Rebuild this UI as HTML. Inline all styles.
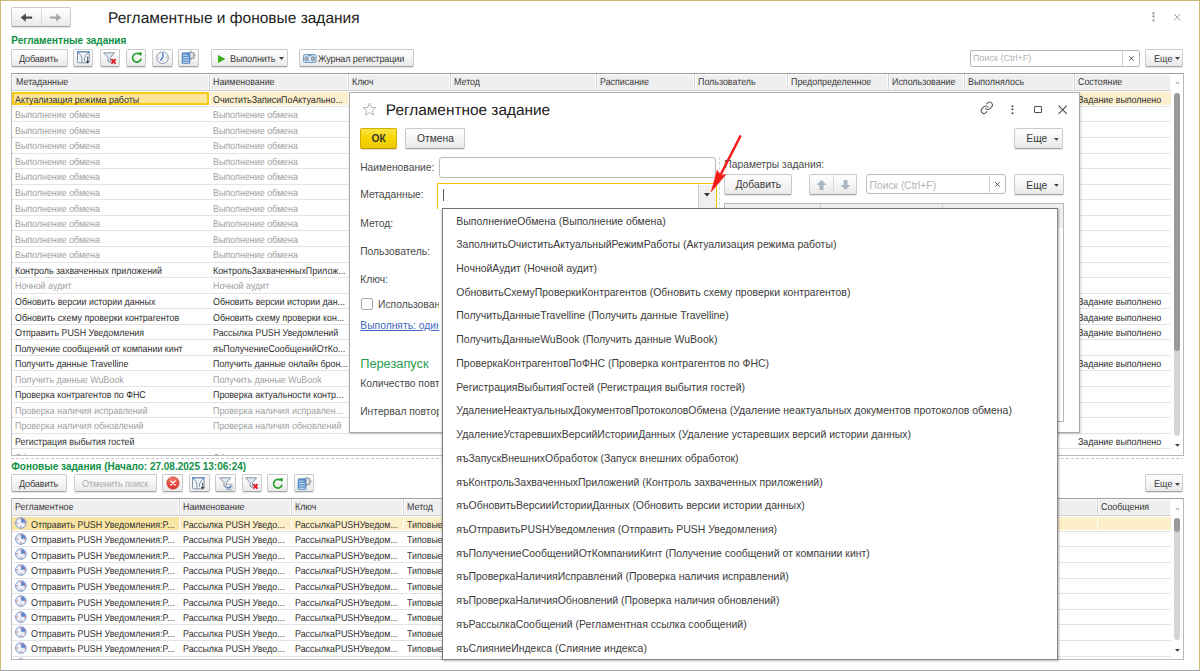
<!DOCTYPE html><html><head><meta charset="utf-8"><style>
*{box-sizing:border-box}
html,body{margin:0;padding:0}
body{width:1200px;height:671px;overflow:hidden;position:relative;background:#fff;font-family:"Liberation Sans",sans-serif;color:#333}
.ab{position:absolute}
.t{position:absolute;white-space:nowrap;line-height:1}
.btn{position:absolute;border:1px solid #cacaca;border-bottom-color:#a5a5a5;border-radius:2px;background:linear-gradient(#ffffff,#f4f4f4 55%,#e9e9e9);box-shadow:0 1px 0 rgba(0,0,0,.10)}
.hdr{position:absolute;background:#f0f0f0}
.sep{position:absolute;width:1px;background:#d8d8d8}
.rl{position:absolute;height:1px;background:#e4e4e4}
.clip{position:absolute;overflow:hidden}
svg{position:absolute;overflow:visible}
</style></head><body>
<div class="ab" style="left:0;top:0;width:1200px;height:1px;background:#cbbb78"></div>
<div class="ab" style="left:0;top:0;width:1px;height:670px;background:#cbbb78"></div>
<div class="ab" style="left:1199px;top:0;width:1px;height:670px;background:#cbbb78"></div>
<div class="ab" style="left:0;top:670px;width:1200px;height:1px;background:#a6a6a6"></div>
<div class="btn" style="left:11px;top:7px;width:60px;height:20.3px"></div>
<div class="ab" style="left:41px;top:8px;width:1px;height:18.3px;background:#dcdcdc"></div>
<svg style="left:0;top:0" width="80" height="30" viewBox="0 0 80 30"><path d="M20.6 17.6 L25.9 13.4 L25.9 21.8Z" fill="#4a4a4a"/><rect x="25" y="16.5" width="7.1" height="2.2" fill="#4a4a4a"/><path d="M61.4 17.6 L56.1 13.4 L56.1 21.8Z" fill="#a8a8a8"/><rect x="49.9" y="16.5" width="7.1" height="2.2" fill="#a8a8a8"/></svg>
<div class="t" style="left:108.00px;top:11.00px;font-size:15.5px;color:#1c1c1c;font-weight:normal;text-rendering:geometricPrecision;">Регламентные и фоновые задания</div>
<svg style="left:1150.5px;top:11.00px" width="5" height="5" viewBox="0 0 5 5"><circle cx="2.5" cy="2.4" r="1.05" fill="#8c8c8c"/></svg>
<svg style="left:1150.5px;top:14.30px" width="5" height="5" viewBox="0 0 5 5"><circle cx="2.5" cy="2.4" r="1.05" fill="#8c8c8c"/></svg>
<svg style="left:1150.5px;top:17.60px" width="5" height="5" viewBox="0 0 5 5"><circle cx="2.5" cy="2.4" r="1.05" fill="#8c8c8c"/></svg>
<svg style="left:1172px;top:12px" width="10" height="10" viewBox="0 0 10 10"><path d="M2.2 2.2 L8.4 8.4 M8.4 2.2 L2.2 8.4" stroke="#9c9c9c" stroke-width="1"/></svg>
<div class="t" style="left:11.30px;top:36.00px;font-size:10px;color:#0f8f45;font-weight:bold;">Регламентные задания</div>
<div class="btn" style="left:11px;top:49.2px;width:56.70px;height:17.60px"></div>
<div class="t" style="left:18.90px;top:55.00px;font-size:9.9px;color:#383838;font-weight:normal;transform:scaleX(0.9192);transform-origin:0 0;text-rendering:geometricPrecision;letter-spacing:-0.15px">Добавить</div>
<div class="btn" style="left:73.3px;top:49.2px;width:20.20px;height:17.60px"></div><svg style="left:76.8px;top:51px" width="14" height="14" viewBox="0 0 14 14">
<rect x="0.5" y="0.5" width="11.6" height="11.3" rx="1.2" fill="#f3f6f9" stroke="#7f8fa2" stroke-width="1"/>
<path d="M1 1 H11.6" stroke="#7a9ac0" stroke-width="1.2"/>
<path d="M1.3 1.6 Q4.6 4.2 5 7.2 V11.2 M11.3 1.6 Q8 4.2 7.6 7.2 V10" fill="none" stroke="#6f8092" stroke-width="0.9"/>
<rect x="-0.1" y="0.2" width="1.8" height="1.8" fill="#3f86d6"/><rect x="10.9" y="0.2" width="1.8" height="1.8" fill="#3f86d6"/>
<path d="M10.6 5.6 V11" stroke="#5a6a7a" stroke-width="1.1"/><path d="M8.8 10 L10.6 12.6 L12.4 10Z" fill="#2f3f4f"/>
</svg>
<div class="btn" style="left:99.5px;top:49.2px;width:20.50px;height:17.60px"></div><svg style="left:102.8px;top:51.5px" width="14" height="14" viewBox="0 0 14 14">
<path d="M0.6 0.8 H11.6 L7.4 5.6 V10.4 L5 9.4 V5.6Z" fill="#e3e9ef" stroke="#8796a8" stroke-width="1" stroke-linejoin="round"/>
<path d="M8.4 7.2 L12.6 11.6 M12.6 7.2 L8.4 11.6" stroke="#e31c24" stroke-width="1.9"/>
</svg>
<div class="btn" style="left:125.5px;top:49.2px;width:20.50px;height:17.60px"></div><svg style="left:129.6px;top:51.2px" width="14" height="14" viewBox="0 0 14 14">
<path d="M11.1 7.6 A4.3 4.3 0 1 1 9.6 3.4" fill="none" stroke="#27a22c" stroke-width="1.7"/>
<path d="M8.2 1.7 L11.9 1.2 L11.1 5.2Z" fill="#139a1e"/>
</svg>
<div class="btn" style="left:152px;top:49.2px;width:20.50px;height:17.60px"></div><svg style="left:155.5px;top:51.2px" width="14" height="14" viewBox="0 0 14 14">
<circle cx="6.5" cy="6.7" r="5.8" fill="#f3f7fb" stroke="#8a9bb0" stroke-width="1"/>
<path d="M6.6 1.9 Q7.4 4 6.8 6.4 L4.2 9.6" stroke="#2f6db8" stroke-width="1.2" fill="none"/>
<circle cx="2.7" cy="6.6" r=".65" fill="#f08080"/><circle cx="10.5" cy="6.6" r=".65" fill="#f08080"/><circle cx="6.7" cy="10.3" r=".65" fill="#f08080"/>
</svg>
<div class="btn" style="left:178px;top:49.2px;width:21.00px;height:17.60px"></div><svg style="left:181px;top:51.2px" width="15" height="14" viewBox="0 0 15 14">
<path d="M14.14 3.69 L14.14 5.11 L13.02 5.08 L12.62 6.05 L13.43 6.82 L12.42 7.83 L11.65 7.02 L10.68 7.42 L10.71 8.54 L9.29 8.54 L9.32 7.42 L8.35 7.02 L7.58 7.83 L6.57 6.82 L7.38 6.05 L6.98 5.08 L5.86 5.11 L5.86 3.69 L6.98 3.72 L7.38 2.75 L6.57 1.98 L7.58 0.97 L8.35 1.78 L9.32 1.38 L9.29 0.26 L10.71 0.26 L10.68 1.38 L11.65 1.78 L12.42 0.97 L13.43 1.98 L12.62 2.75 L13.02 3.72Z" fill="#a8a8b0" stroke="#85858c" stroke-width=".5"/>
<circle cx="10" cy="4.4" r="2.3" fill="#e4e4ec"/>
<rect x="1" y="1.8" width="8" height="10.8" rx="1.2" fill="#5c92cb" stroke="#4477b0" stroke-width=".6"/>
<path d="M1.8 4.2 H6.6 M1.8 6.6 H8.2 M1.8 9 H8.2 M1.8 11.3 H8.2" stroke="#d8e8fa" stroke-width=".9"/>
</svg>
<div class="btn" style="left:211px;top:49.2px;width:76.70px;height:17.60px"></div><svg style="left:218px;top:54.5px" width="8" height="8" viewBox="0 0 8 8"><path d="M0 0 L7.4 4 L0 8Z" fill="#3aae1f"/></svg><svg style="left:279px;top:57.3px" width="5" height="3" viewBox="0 0 5 3"><path d="M0 0 H5 L2.5 3Z" fill="#404040"/></svg>
<div class="t" style="left:230.00px;top:55.00px;font-size:9.9px;color:#383838;font-weight:normal;transform:scaleX(0.9192);transform-origin:0 0;text-rendering:geometricPrecision;letter-spacing:-0.15px">Выполнить</div>
<div class="btn" style="left:299.2px;top:49.2px;width:114.60px;height:17.60px"></div><svg style="left:303px;top:54px" width="14" height="9" viewBox="0 0 14 9"><rect x=".5" y=".5" width="12.6" height="8" rx="1.3" fill="#c3def6" stroke="#7c9dc0"/><rect x="5" y="3.8" width="3.6" height="2" fill="#e8f4ff"/><ellipse cx="3.6" cy="4.8" rx="1.5" ry="1.8" fill="#c8ccd0" stroke="#5d6a78" stroke-width=".8"/><ellipse cx="10" cy="4.8" rx="1.5" ry="1.8" fill="#c8ccd0" stroke="#5d6a78" stroke-width=".8"/><path d="M5.2 1.6 H8.4" stroke="#6a7888" stroke-width=".9"/></svg>
<div class="t" style="left:318.00px;top:55.00px;font-size:9.9px;color:#383838;font-weight:normal;transform:scaleX(0.9192);transform-origin:0 0;text-rendering:geometricPrecision;letter-spacing:-0.12px">Журнал регистрации</div>
<div class="btn" style="left:1145px;top:49.2px;width:38.40px;height:17.60px"></div><svg style="left:1175px;top:57.3px" width="5" height="3" viewBox="0 0 5 3"><path d="M0 0 H5 L2.5 3Z" fill="#404040"/></svg>
<div class="t" style="left:1153.50px;top:55.00px;font-size:9.9px;color:#383838;font-weight:normal;transform:scaleX(0.9192);transform-origin:0 0;text-rendering:geometricPrecision;">Еще</div>
<div class="ab" style="left:970px;top:50px;width:170px;height:16.6px;border:1px solid #b7b7b7;border-radius:2px;background:#fff"></div>
<div class="ab" style="left:1122px;top:51px;width:1px;height:14.6px;background:#d2d2d2"></div>
<div class="t" style="left:973.00px;top:54.00px;font-size:9px;color:#b2b2b2;font-weight:normal;">Поиск (Ctrl+F)</div>
<svg style="left:1128px;top:55px" width="7" height="7" viewBox="0 0 7 7"><path d="M1.3 1.3 L5.5 5.5 M5.5 1.3 L1.3 5.5" stroke="#4a4a4a" stroke-width="1"/></svg>
<div class="ab" style="left:11px;top:73px;width:1173px;height:383px;border:1px solid #b9b9b9;border-top-color:#9c9c9c;background:#fff"></div>
<div class="clip" style="left:12px;top:74px;width:1159px;height:381px">
<div class="ab" style="left:0px;top:0;width:197px;height:16.299999999999997px;background:#efefef;border:1px solid #fdfdfd;border-bottom:none"></div>
<div class="ab" style="left:198px;top:0;width:138px;height:16.299999999999997px;background:#efefef;border:1px solid #fdfdfd;border-bottom:none"></div>
<div class="ab" style="left:337px;top:0;width:101px;height:16.299999999999997px;background:#efefef;border:1px solid #fdfdfd;border-bottom:none"></div>
<div class="ab" style="left:439px;top:0;width:145px;height:16.299999999999997px;background:#efefef;border:1px solid #fdfdfd;border-bottom:none"></div>
<div class="ab" style="left:585px;top:0;width:97px;height:16.299999999999997px;background:#efefef;border:1px solid #fdfdfd;border-bottom:none"></div>
<div class="ab" style="left:683px;top:0;width:92px;height:16.299999999999997px;background:#efefef;border:1px solid #fdfdfd;border-bottom:none"></div>
<div class="ab" style="left:776px;top:0;width:100px;height:16.299999999999997px;background:#efefef;border:1px solid #fdfdfd;border-bottom:none"></div>
<div class="ab" style="left:877px;top:0;width:75px;height:16.299999999999997px;background:#efefef;border:1px solid #fdfdfd;border-bottom:none"></div>
<div class="ab" style="left:953px;top:0;width:109px;height:16.299999999999997px;background:#efefef;border:1px solid #fdfdfd;border-bottom:none"></div>
<div class="ab" style="left:1063px;top:0;width:96px;height:16.299999999999997px;background:#efefef;border:1px solid #fdfdfd;border-bottom:none"></div>
<div class="ab" style="left:197px;top:0;width:1px;height:16.299999999999997px;background:#d3d3d3"></div>
<div class="ab" style="left:336px;top:0;width:1px;height:16.299999999999997px;background:#d3d3d3"></div>
<div class="ab" style="left:438px;top:0;width:1px;height:16.299999999999997px;background:#d3d3d3"></div>
<div class="ab" style="left:584px;top:0;width:1px;height:16.299999999999997px;background:#d3d3d3"></div>
<div class="ab" style="left:682px;top:0;width:1px;height:16.299999999999997px;background:#d3d3d3"></div>
<div class="ab" style="left:775px;top:0;width:1px;height:16.299999999999997px;background:#d3d3d3"></div>
<div class="ab" style="left:876px;top:0;width:1px;height:16.299999999999997px;background:#d3d3d3"></div>
<div class="ab" style="left:952px;top:0;width:1px;height:16.299999999999997px;background:#d3d3d3"></div>
<div class="ab" style="left:1062px;top:0;width:1px;height:16.299999999999997px;background:#d3d3d3"></div>
<div class="ab" style="left:0;top:16.299999999999997px;width:1159px;height:1px;background:#d2d2d2"></div>
<div class="t" style="left:3.50px;top:4.00px;font-size:9.9px;color:#383838;font-weight:normal;transform:scaleX(0.8990);transform-origin:0 0;text-rendering:geometricPrecision;">Метаданные</div>
<div class="t" style="left:200.50px;top:4.00px;font-size:9.9px;color:#383838;font-weight:normal;transform:scaleX(0.8990);transform-origin:0 0;text-rendering:geometricPrecision;">Наименование</div>
<div class="t" style="left:339.50px;top:4.00px;font-size:9.9px;color:#383838;font-weight:normal;transform:scaleX(0.8990);transform-origin:0 0;text-rendering:geometricPrecision;">Ключ</div>
<div class="t" style="left:441.50px;top:4.00px;font-size:9.9px;color:#383838;font-weight:normal;transform:scaleX(0.8990);transform-origin:0 0;text-rendering:geometricPrecision;">Метод</div>
<div class="t" style="left:587.50px;top:4.00px;font-size:9.9px;color:#383838;font-weight:normal;transform:scaleX(0.8990);transform-origin:0 0;text-rendering:geometricPrecision;">Расписание</div>
<div class="t" style="left:685.50px;top:4.00px;font-size:9.9px;color:#383838;font-weight:normal;transform:scaleX(0.8990);transform-origin:0 0;text-rendering:geometricPrecision;">Пользователь</div>
<div class="t" style="left:778.50px;top:4.00px;font-size:9.9px;color:#383838;font-weight:normal;transform:scaleX(0.8990);transform-origin:0 0;text-rendering:geometricPrecision;">Предопределенное</div>
<div class="t" style="left:879.50px;top:4.00px;font-size:9.9px;color:#383838;font-weight:normal;transform:scaleX(0.8990);transform-origin:0 0;text-rendering:geometricPrecision;">Использование</div>
<div class="t" style="left:955.50px;top:4.00px;font-size:9.9px;color:#383838;font-weight:normal;transform:scaleX(0.8990);transform-origin:0 0;text-rendering:geometricPrecision;">Выполнялось</div>
<div class="t" style="left:1065.50px;top:4.00px;font-size:9.9px;color:#383838;font-weight:normal;transform:scaleX(0.8990);transform-origin:0 0;text-rendering:geometricPrecision;">Состояние</div>
<div class="rl" style="left:0;top:31.86px;width:1159px"></div>
<div class="ab" style="left:0;top:17.60px;width:1159px;height:13.36px;background:#fdf0cd"></div>
<div class="ab" style="left:0;top:17.60px;width:197px;height:13.36px;background:#fbe69a;border:2px solid #f9c910"></div>
<div class="ab" style="left:197px;top:17.30px;width:1px;height:14.56px;background:#fff"></div>
<div class="ab" style="left:336px;top:17.30px;width:1px;height:14.56px;background:#fff"></div>
<div class="ab" style="left:438px;top:17.30px;width:1px;height:14.56px;background:#fff"></div>
<div class="ab" style="left:584px;top:17.30px;width:1px;height:14.56px;background:#fff"></div>
<div class="ab" style="left:682px;top:17.30px;width:1px;height:14.56px;background:#fff"></div>
<div class="ab" style="left:775px;top:17.30px;width:1px;height:14.56px;background:#fff"></div>
<div class="ab" style="left:876px;top:17.30px;width:1px;height:14.56px;background:#fff"></div>
<div class="ab" style="left:952px;top:17.30px;width:1px;height:14.56px;background:#fff"></div>
<div class="ab" style="left:1062px;top:17.30px;width:1px;height:14.56px;background:#fff"></div>
<div class="t" style="left:3.00px;top:22.00px;font-size:9.9px;color:#2e2e2e;font-weight:normal;transform:scaleX(0.8990);transform-origin:0 0;text-rendering:geometricPrecision;">Актуализация режима работы</div>
<div class="t" style="left:201.00px;top:22.00px;font-size:9.9px;color:#2e2e2e;font-weight:normal;transform:scaleX(0.8990);transform-origin:0 0;text-rendering:geometricPrecision;">ОчиститьЗаписиПоАктуально...</div>
<div class="t" style="left:1066.00px;top:22.00px;font-size:9.9px;color:#2e2e2e;font-weight:normal;transform:scaleX(0.8990);transform-origin:0 0;text-rendering:geometricPrecision;">Задание выполнено</div>
<div class="rl" style="left:0;top:47.43px;width:1159px"></div>
<div class="t" style="left:3.00px;top:37.00px;font-size:9.9px;color:#a0a0a0;font-weight:normal;transform:scaleX(0.8990);transform-origin:0 0;text-rendering:geometricPrecision;">Выполнение обмена</div>
<div class="t" style="left:201.00px;top:37.00px;font-size:9.9px;color:#a0a0a0;font-weight:normal;transform:scaleX(0.8990);transform-origin:0 0;text-rendering:geometricPrecision;">Выполнение обмена</div>
<div class="rl" style="left:0;top:63.00px;width:1159px"></div>
<div class="t" style="left:3.00px;top:53.00px;font-size:9.9px;color:#a0a0a0;font-weight:normal;transform:scaleX(0.8990);transform-origin:0 0;text-rendering:geometricPrecision;">Выполнение обмена</div>
<div class="t" style="left:201.00px;top:53.00px;font-size:9.9px;color:#a0a0a0;font-weight:normal;transform:scaleX(0.8990);transform-origin:0 0;text-rendering:geometricPrecision;">Выполнение обмена</div>
<div class="rl" style="left:0;top:78.56px;width:1159px"></div>
<div class="t" style="left:3.00px;top:68.00px;font-size:9.9px;color:#a0a0a0;font-weight:normal;transform:scaleX(0.8990);transform-origin:0 0;text-rendering:geometricPrecision;">Выполнение обмена</div>
<div class="t" style="left:201.00px;top:68.00px;font-size:9.9px;color:#a0a0a0;font-weight:normal;transform:scaleX(0.8990);transform-origin:0 0;text-rendering:geometricPrecision;">Выполнение обмена</div>
<div class="rl" style="left:0;top:94.12px;width:1159px"></div>
<div class="t" style="left:3.00px;top:84.00px;font-size:9.9px;color:#a0a0a0;font-weight:normal;transform:scaleX(0.8990);transform-origin:0 0;text-rendering:geometricPrecision;">Выполнение обмена</div>
<div class="t" style="left:201.00px;top:84.00px;font-size:9.9px;color:#a0a0a0;font-weight:normal;transform:scaleX(0.8990);transform-origin:0 0;text-rendering:geometricPrecision;">Выполнение обмена</div>
<div class="rl" style="left:0;top:109.69px;width:1159px"></div>
<div class="t" style="left:3.00px;top:99.00px;font-size:9.9px;color:#a0a0a0;font-weight:normal;transform:scaleX(0.8990);transform-origin:0 0;text-rendering:geometricPrecision;">Выполнение обмена</div>
<div class="t" style="left:201.00px;top:99.00px;font-size:9.9px;color:#a0a0a0;font-weight:normal;transform:scaleX(0.8990);transform-origin:0 0;text-rendering:geometricPrecision;">Выполнение обмена</div>
<div class="rl" style="left:0;top:125.25px;width:1159px"></div>
<div class="t" style="left:3.00px;top:115.00px;font-size:9.9px;color:#a0a0a0;font-weight:normal;transform:scaleX(0.8990);transform-origin:0 0;text-rendering:geometricPrecision;">Выполнение обмена</div>
<div class="t" style="left:201.00px;top:115.00px;font-size:9.9px;color:#a0a0a0;font-weight:normal;transform:scaleX(0.8990);transform-origin:0 0;text-rendering:geometricPrecision;">Выполнение обмена</div>
<div class="rl" style="left:0;top:140.82px;width:1159px"></div>
<div class="t" style="left:3.00px;top:131.00px;font-size:9.9px;color:#a0a0a0;font-weight:normal;transform:scaleX(0.8990);transform-origin:0 0;text-rendering:geometricPrecision;">Выполнение обмена</div>
<div class="t" style="left:201.00px;top:131.00px;font-size:9.9px;color:#a0a0a0;font-weight:normal;transform:scaleX(0.8990);transform-origin:0 0;text-rendering:geometricPrecision;">Выполнение обмена</div>
<div class="rl" style="left:0;top:156.38px;width:1159px"></div>
<div class="t" style="left:3.00px;top:146.00px;font-size:9.9px;color:#a0a0a0;font-weight:normal;transform:scaleX(0.8990);transform-origin:0 0;text-rendering:geometricPrecision;">Выполнение обмена</div>
<div class="t" style="left:201.00px;top:146.00px;font-size:9.9px;color:#a0a0a0;font-weight:normal;transform:scaleX(0.8990);transform-origin:0 0;text-rendering:geometricPrecision;">Выполнение обмена</div>
<div class="rl" style="left:0;top:171.95px;width:1159px"></div>
<div class="t" style="left:3.00px;top:162.00px;font-size:9.9px;color:#a0a0a0;font-weight:normal;transform:scaleX(0.8990);transform-origin:0 0;text-rendering:geometricPrecision;">Выполнение обмена</div>
<div class="t" style="left:201.00px;top:162.00px;font-size:9.9px;color:#a0a0a0;font-weight:normal;transform:scaleX(0.8990);transform-origin:0 0;text-rendering:geometricPrecision;">Выполнение обмена</div>
<div class="rl" style="left:0;top:187.51px;width:1159px"></div>
<div class="t" style="left:3.00px;top:177.00px;font-size:9.9px;color:#a0a0a0;font-weight:normal;transform:scaleX(0.8990);transform-origin:0 0;text-rendering:geometricPrecision;">Выполнение обмена</div>
<div class="t" style="left:201.00px;top:177.00px;font-size:9.9px;color:#a0a0a0;font-weight:normal;transform:scaleX(0.8990);transform-origin:0 0;text-rendering:geometricPrecision;">Выполнение обмена</div>
<div class="rl" style="left:0;top:203.08px;width:1159px"></div>
<div class="t" style="left:3.00px;top:193.00px;font-size:9.9px;color:#2e2e2e;font-weight:normal;transform:scaleX(0.8990);transform-origin:0 0;text-rendering:geometricPrecision;">Контроль захваченных приложений</div>
<div class="t" style="left:201.00px;top:193.00px;font-size:9.9px;color:#2e2e2e;font-weight:normal;transform:scaleX(0.8990);transform-origin:0 0;text-rendering:geometricPrecision;">КонтрольЗахваченныхПрилож...</div>
<div class="rl" style="left:0;top:218.64px;width:1159px"></div>
<div class="t" style="left:3.00px;top:208.00px;font-size:9.9px;color:#a0a0a0;font-weight:normal;transform:scaleX(0.8990);transform-origin:0 0;text-rendering:geometricPrecision;">Ночной аудит</div>
<div class="t" style="left:201.00px;top:208.00px;font-size:9.9px;color:#a0a0a0;font-weight:normal;transform:scaleX(0.8990);transform-origin:0 0;text-rendering:geometricPrecision;">Ночной аудит</div>
<div class="rl" style="left:0;top:234.21px;width:1159px"></div>
<div class="t" style="left:3.00px;top:224.00px;font-size:9.9px;color:#2e2e2e;font-weight:normal;transform:scaleX(0.8990);transform-origin:0 0;text-rendering:geometricPrecision;">Обновить версии истории данных</div>
<div class="t" style="left:201.00px;top:224.00px;font-size:9.9px;color:#2e2e2e;font-weight:normal;transform:scaleX(0.8990);transform-origin:0 0;text-rendering:geometricPrecision;">Обновить версии истории дан...</div>
<div class="t" style="left:1066.00px;top:224.00px;font-size:9.9px;color:#2e2e2e;font-weight:normal;transform:scaleX(0.8990);transform-origin:0 0;text-rendering:geometricPrecision;">Задание выполнено</div>
<div class="rl" style="left:0;top:249.77px;width:1159px"></div>
<div class="t" style="left:3.00px;top:240.00px;font-size:9.9px;color:#2e2e2e;font-weight:normal;transform:scaleX(0.8990);transform-origin:0 0;text-rendering:geometricPrecision;">Обновить схему проверки контрагентов</div>
<div class="t" style="left:201.00px;top:240.00px;font-size:9.9px;color:#2e2e2e;font-weight:normal;transform:scaleX(0.8990);transform-origin:0 0;text-rendering:geometricPrecision;">Обновить схему проверки кон...</div>
<div class="t" style="left:1066.00px;top:240.00px;font-size:9.9px;color:#2e2e2e;font-weight:normal;transform:scaleX(0.8990);transform-origin:0 0;text-rendering:geometricPrecision;">Задание выполнено</div>
<div class="rl" style="left:0;top:265.34px;width:1159px"></div>
<div class="t" style="left:3.00px;top:255.00px;font-size:9.9px;color:#2e2e2e;font-weight:normal;transform:scaleX(0.8990);transform-origin:0 0;text-rendering:geometricPrecision;">Отправить PUSH Уведомления</div>
<div class="t" style="left:201.00px;top:255.00px;font-size:9.9px;color:#2e2e2e;font-weight:normal;transform:scaleX(0.8990);transform-origin:0 0;text-rendering:geometricPrecision;">Рассылка PUSH Уведомлений</div>
<div class="t" style="left:1066.00px;top:255.00px;font-size:9.9px;color:#2e2e2e;font-weight:normal;transform:scaleX(0.8990);transform-origin:0 0;text-rendering:geometricPrecision;">Задание выполнено</div>
<div class="rl" style="left:0;top:280.90px;width:1159px"></div>
<div class="t" style="left:3.00px;top:271.00px;font-size:9.9px;color:#2e2e2e;font-weight:normal;transform:scaleX(0.8990);transform-origin:0 0;text-rendering:geometricPrecision;">Получение сообщений от компании кинт</div>
<div class="t" style="left:201.00px;top:271.00px;font-size:9.9px;color:#2e2e2e;font-weight:normal;transform:scaleX(0.8990);transform-origin:0 0;text-rendering:geometricPrecision;">яъПолучениеСообщенийОтКо...</div>
<div class="rl" style="left:0;top:296.47px;width:1159px"></div>
<div class="t" style="left:3.00px;top:286.00px;font-size:9.9px;color:#2e2e2e;font-weight:normal;transform:scaleX(0.8990);transform-origin:0 0;text-rendering:geometricPrecision;">Получить данные Travelline</div>
<div class="t" style="left:201.00px;top:286.00px;font-size:9.9px;color:#2e2e2e;font-weight:normal;transform:scaleX(0.8990);transform-origin:0 0;text-rendering:geometricPrecision;">Получить данные онлайн брон...</div>
<div class="t" style="left:1066.00px;top:286.00px;font-size:9.9px;color:#2e2e2e;font-weight:normal;transform:scaleX(0.8990);transform-origin:0 0;text-rendering:geometricPrecision;">Задание выполнено</div>
<div class="rl" style="left:0;top:312.04px;width:1159px"></div>
<div class="t" style="left:3.00px;top:302.00px;font-size:9.9px;color:#a0a0a0;font-weight:normal;transform:scaleX(0.8990);transform-origin:0 0;text-rendering:geometricPrecision;">Получить данные WuBook</div>
<div class="t" style="left:201.00px;top:302.00px;font-size:9.9px;color:#a0a0a0;font-weight:normal;transform:scaleX(0.8990);transform-origin:0 0;text-rendering:geometricPrecision;">Получить данные WuBook</div>
<div class="rl" style="left:0;top:327.60px;width:1159px"></div>
<div class="t" style="left:3.00px;top:317.00px;font-size:9.9px;color:#2e2e2e;font-weight:normal;transform:scaleX(0.8990);transform-origin:0 0;text-rendering:geometricPrecision;">Проверка контрагентов по ФНС</div>
<div class="t" style="left:201.00px;top:317.00px;font-size:9.9px;color:#2e2e2e;font-weight:normal;transform:scaleX(0.8990);transform-origin:0 0;text-rendering:geometricPrecision;">Проверка актуальности контр...</div>
<div class="rl" style="left:0;top:343.17px;width:1159px"></div>
<div class="t" style="left:3.00px;top:333.00px;font-size:9.9px;color:#a0a0a0;font-weight:normal;transform:scaleX(0.8990);transform-origin:0 0;text-rendering:geometricPrecision;">Проверка наличия исправлений</div>
<div class="t" style="left:201.00px;top:333.00px;font-size:9.9px;color:#a0a0a0;font-weight:normal;transform:scaleX(0.8990);transform-origin:0 0;text-rendering:geometricPrecision;">Проверка наличия исправлен...</div>
<div class="rl" style="left:0;top:358.73px;width:1159px"></div>
<div class="t" style="left:3.00px;top:348.00px;font-size:9.9px;color:#a0a0a0;font-weight:normal;transform:scaleX(0.8990);transform-origin:0 0;text-rendering:geometricPrecision;">Проверка наличия обновлений</div>
<div class="t" style="left:201.00px;top:348.00px;font-size:9.9px;color:#a0a0a0;font-weight:normal;transform:scaleX(0.8990);transform-origin:0 0;text-rendering:geometricPrecision;">Проверка наличия обновлений</div>
<div class="rl" style="left:0;top:374.30px;width:1159px"></div>
<div class="t" style="left:3.00px;top:364.00px;font-size:9.9px;color:#2e2e2e;font-weight:normal;transform:scaleX(0.8990);transform-origin:0 0;text-rendering:geometricPrecision;">Регистрация выбытия гостей</div>
<div class="t" style="left:1066.00px;top:364.00px;font-size:9.9px;color:#2e2e2e;font-weight:normal;transform:scaleX(0.8990);transform-origin:0 0;text-rendering:geometricPrecision;">Задание выполнено</div>
<div class="rl" style="left:0;top:389.86px;width:1159px"></div>
<div class="t" style="left:3.00px;top:380.00px;font-size:9.9px;color:#a0a0a0;font-weight:normal;transform:scaleX(0.8990);transform-origin:0 0;text-rendering:geometricPrecision;">Сформировать отчеты по расписанию</div>
<div class="t" style="left:201.00px;top:380.00px;font-size:9.9px;color:#a0a0a0;font-weight:normal;transform:scaleX(0.8990);transform-origin:0 0;text-rendering:geometricPrecision;">Сформировать отчеты</div>
</div>
<svg style="left:1174.6px;top:81.2px" width="5" height="3" viewBox="0 0 5 3"><path d="M0 3 L2.45 0 L4.9 3Z" fill="#c6c6c6"/></svg>
<div class="ab" style="left:1174.2px;top:92.6px;width:5.8px;height:343px;border-radius:3px;background:#d5d5d5"></div>
<div class="ab" style="left:1174.2px;top:92.6px;width:5.8px;height:258.8px;border-radius:3px;background:#9a9a9a"></div>
<svg style="left:1174.6px;top:444.1px" width="5" height="3" viewBox="0 0 5 3"><path d="M0 0 L4.9 0 L2.45 2.8Z" fill="#3c3c3c"/></svg>
<div class="ab" style="left:11px;top:457.6px;width:1172px;height:1px;background:repeating-linear-gradient(90deg,#c8c8c8 0 3px,transparent 3px 5px)"></div>
<div class="t" style="left:11.30px;top:462.00px;font-size:10px;color:#0f8f45;font-weight:bold;">Фоновые задания (Начало: 27.08.2025 13:06:24)</div>
<div class="btn" style="left:11px;top:474.2px;width:56.40px;height:17.60px"></div>
<div class="t" style="left:18.90px;top:480.00px;font-size:9.9px;color:#383838;font-weight:normal;transform:scaleX(0.9192);transform-origin:0 0;text-rendering:geometricPrecision;letter-spacing:-0.15px">Добавить</div>
<div class="btn" style="left:73.7px;top:474.2px;width:83.60px;height:17.60px"></div>
<div class="t" style="left:81.50px;top:480.00px;font-size:9.9px;color:#ababab;font-weight:normal;transform:scaleX(0.9192);transform-origin:0 0;text-rendering:geometricPrecision;letter-spacing:-0.12px">Отменить поиск</div>
<div class="btn" style="left:162.3px;top:474.2px;width:21.10px;height:17.60px"></div><svg style="left:165.8px;top:476.3px" width="14" height="14" viewBox="0 0 14 14">
<defs><linearGradient id="rg" x1="0" y1="0" x2="0" y2="1"><stop offset="0" stop-color="#f27a6a"/><stop offset="1" stop-color="#d8302a"/></linearGradient></defs>
<circle cx="7" cy="7" r="6.2" fill="url(#rg)" stroke="#c9342c" stroke-width=".6"/>
<path d="M4.9 4.9 L9.1 9.1 M9.1 4.9 L4.9 9.1" stroke="#fff" stroke-width="1.35" stroke-linecap="round"/>
</svg>
<div class="btn" style="left:189px;top:474.2px;width:20.60px;height:17.60px"></div><svg style="left:192.3px;top:476.5px" width="14" height="14" viewBox="0 0 14 14">
<rect x="0.5" y="0.5" width="11.6" height="11.3" rx="1.2" fill="#f3f6f9" stroke="#7f8fa2" stroke-width="1"/>
<path d="M1 1 H11.6" stroke="#7a9ac0" stroke-width="1.2"/>
<path d="M1.3 1.6 Q4.6 4.2 5 7.2 V11.2 M11.3 1.6 Q8 4.2 7.6 7.2 V10" fill="none" stroke="#6f8092" stroke-width="0.9"/>
<rect x="-0.1" y="0.2" width="1.8" height="1.8" fill="#3f86d6"/><rect x="10.9" y="0.2" width="1.8" height="1.8" fill="#3f86d6"/>
<path d="M10.6 5.6 V11" stroke="#5a6a7a" stroke-width="1.1"/><path d="M8.8 10 L10.6 12.6 L12.4 10Z" fill="#2f3f4f"/>
</svg>
<div class="btn" style="left:215.3px;top:474.2px;width:20.70px;height:17.60px"></div><svg style="left:218.5px;top:476.5px" width="14" height="14" viewBox="0 0 14 14">
<path d="M0.6 0.8 H11.6 L7.4 5.6 V10.4 L5 9.4 V5.6Z" fill="#e3e9ef" stroke="#8796a8" stroke-width="1" stroke-linejoin="round"/>
<rect x="7.3" y="7.3" width="5.6" height="5.4" rx=".6" fill="#fff" stroke="#8796a8" stroke-width="0.8"/>
<path d="M8.3 10 L9.7 11.4 L12.2 8.6" stroke="#2a62c8" stroke-width="1.2" fill="none"/>
</svg>
<div class="btn" style="left:241.5px;top:474.2px;width:20.30px;height:17.60px"></div><svg style="left:244.8px;top:476.8px" width="14" height="14" viewBox="0 0 14 14">
<path d="M0.6 0.8 H11.6 L7.4 5.6 V10.4 L5 9.4 V5.6Z" fill="#e3e9ef" stroke="#8796a8" stroke-width="1" stroke-linejoin="round"/>
<path d="M8.4 7.2 L12.6 11.6 M12.6 7.2 L8.4 11.6" stroke="#e31c24" stroke-width="1.9"/>
</svg>
<div class="btn" style="left:267.3px;top:474.2px;width:20.90px;height:17.60px"></div><svg style="left:270.8px;top:476.8px" width="14" height="14" viewBox="0 0 14 14">
<path d="M11.1 7.6 A4.3 4.3 0 1 1 9.6 3.4" fill="none" stroke="#27a22c" stroke-width="1.7"/>
<path d="M8.2 1.7 L11.9 1.2 L11.1 5.2Z" fill="#139a1e"/>
</svg>
<div class="btn" style="left:293.7px;top:474.2px;width:20.70px;height:17.60px"></div><svg style="left:296.8px;top:476.5px" width="15" height="14" viewBox="0 0 15 14">
<path d="M14.14 3.69 L14.14 5.11 L13.02 5.08 L12.62 6.05 L13.43 6.82 L12.42 7.83 L11.65 7.02 L10.68 7.42 L10.71 8.54 L9.29 8.54 L9.32 7.42 L8.35 7.02 L7.58 7.83 L6.57 6.82 L7.38 6.05 L6.98 5.08 L5.86 5.11 L5.86 3.69 L6.98 3.72 L7.38 2.75 L6.57 1.98 L7.58 0.97 L8.35 1.78 L9.32 1.38 L9.29 0.26 L10.71 0.26 L10.68 1.38 L11.65 1.78 L12.42 0.97 L13.43 1.98 L12.62 2.75 L13.02 3.72Z" fill="#a8a8b0" stroke="#85858c" stroke-width=".5"/>
<circle cx="10" cy="4.4" r="2.3" fill="#e4e4ec"/>
<rect x="1" y="1.8" width="8" height="10.8" rx="1.2" fill="#5c92cb" stroke="#4477b0" stroke-width=".6"/>
<path d="M1.8 4.2 H6.6 M1.8 6.6 H8.2 M1.8 9 H8.2 M1.8 11.3 H8.2" stroke="#d8e8fa" stroke-width=".9"/>
</svg>
<div class="btn" style="left:1145.3px;top:474.2px;width:38.10px;height:17.60px"></div><svg style="left:1175.3px;top:482.6px" width="5" height="3" viewBox="0 0 5 3"><path d="M0 0 H5 L2.5 3Z" fill="#404040"/></svg>
<div class="t" style="left:1153.80px;top:480.00px;font-size:9.9px;color:#383838;font-weight:normal;transform:scaleX(0.9192);transform-origin:0 0;text-rendering:geometricPrecision;">Еще</div>
<div class="ab" style="left:11px;top:498px;width:1173px;height:162px;border:1px solid #b9b9b9;border-top-color:#9c9c9c;background:#fff"></div>
<div class="clip" style="left:12px;top:499px;width:1159px;height:160px">
<div class="ab" style="left:0px;top:0;width:167px;height:16.200000000000045px;background:#efefef;border:1px solid #fdfdfd;border-bottom:none"></div>
<div class="ab" style="left:168px;top:0;width:111px;height:16.200000000000045px;background:#efefef;border:1px solid #fdfdfd;border-bottom:none"></div>
<div class="ab" style="left:280px;top:0;width:111px;height:16.200000000000045px;background:#efefef;border:1px solid #fdfdfd;border-bottom:none"></div>
<div class="ab" style="left:392px;top:0;width:693px;height:16.200000000000045px;background:#efefef;border:1px solid #fdfdfd;border-bottom:none"></div>
<div class="ab" style="left:1086px;top:0;width:73px;height:16.200000000000045px;background:#efefef;border:1px solid #fdfdfd;border-bottom:none"></div>
<div class="ab" style="left:167px;top:0;width:1px;height:16.200000000000045px;background:#d3d3d3"></div>
<div class="ab" style="left:279px;top:0;width:1px;height:16.200000000000045px;background:#d3d3d3"></div>
<div class="ab" style="left:391px;top:0;width:1px;height:16.200000000000045px;background:#d3d3d3"></div>
<div class="ab" style="left:1085px;top:0;width:1px;height:16.200000000000045px;background:#d3d3d3"></div>
<div class="ab" style="left:0;top:16.200000000000045px;width:1159px;height:1px;background:#d2d2d2"></div>
<div class="t" style="left:3.00px;top:4.00px;font-size:9.9px;color:#383838;font-weight:normal;transform:scaleX(0.8990);transform-origin:0 0;text-rendering:geometricPrecision;">Регламентное</div>
<div class="t" style="left:170.50px;top:4.00px;font-size:9.9px;color:#383838;font-weight:normal;transform:scaleX(0.8990);transform-origin:0 0;text-rendering:geometricPrecision;">Наименование</div>
<div class="t" style="left:282.50px;top:4.00px;font-size:9.9px;color:#383838;font-weight:normal;transform:scaleX(0.8990);transform-origin:0 0;text-rendering:geometricPrecision;">Ключ</div>
<div class="t" style="left:394.50px;top:4.00px;font-size:9.9px;color:#383838;font-weight:normal;transform:scaleX(0.8990);transform-origin:0 0;text-rendering:geometricPrecision;">Метод</div>
<div class="t" style="left:1088.50px;top:4.00px;font-size:9.9px;color:#383838;font-weight:normal;transform:scaleX(0.8990);transform-origin:0 0;text-rendering:geometricPrecision;">Сообщения</div>
<div class="rl" style="left:0;top:31.80px;width:1159px"></div>
<div class="ab" style="left:0;top:17.70px;width:1159px;height:13.80px;background:#fdf0c8"></div>
<div class="ab" style="left:0;top:17.70px;width:167px;height:13.80px;background:#fae6a2"></div>
<div class="ab" style="left:167px;top:17.20px;width:1px;height:14.60px;background:#fff"></div>
<div class="ab" style="left:279px;top:17.20px;width:1px;height:14.60px;background:#fff"></div>
<div class="ab" style="left:391px;top:17.20px;width:1px;height:14.60px;background:#fff"></div>
<div class="ab" style="left:1085px;top:17.20px;width:1px;height:14.60px;background:#fff"></div>
<svg style="left:3.1999999999999993px;top:18.10px" width="12" height="12" viewBox="0 0 12 12"><circle cx="5.9" cy="6" r="5.3" fill="#e9eff9" stroke="#7496d2" stroke-width="1"/><path d="M6.1 5.8 V1.5 A4.4 4.4 0 0 1 10.4 5.8 Z" fill="#5f86cc"/><circle cx="6" cy="2.3" r=".75" fill="#f06a5a"/><circle cx="9.7" cy="6" r=".75" fill="#f06a5a"/><circle cx="6" cy="9.7" r=".75" fill="#f06a5a"/><circle cx="2.2" cy="6" r=".75" fill="#f06a5a"/></svg>
<div class="t" style="left:18.80px;top:22.00px;font-size:9.9px;color:#2e2e2e;font-weight:normal;transform:scaleX(0.8990);transform-origin:0 0;text-rendering:geometricPrecision;">Отправить PUSH Уведомления:P...</div>
<div class="t" style="left:171.00px;top:22.00px;font-size:9.9px;color:#2e2e2e;font-weight:normal;transform:scaleX(0.8990);transform-origin:0 0;text-rendering:geometricPrecision;">Рассылка PUSH Уведо...</div>
<div class="t" style="left:283.00px;top:22.00px;font-size:9.9px;color:#2e2e2e;font-weight:normal;transform:scaleX(0.8990);transform-origin:0 0;text-rendering:geometricPrecision;">РассылкаPUSHУведом...</div>
<div class="t" style="left:394.50px;top:22.00px;font-size:9.9px;color:#2e2e2e;font-weight:normal;transform:scaleX(0.8990);transform-origin:0 0;text-rendering:geometricPrecision;">Типовые</div>
<div class="rl" style="left:0;top:47.40px;width:1159px"></div>
<svg style="left:3.1999999999999993px;top:33.70px" width="12" height="12" viewBox="0 0 12 12"><circle cx="5.9" cy="6" r="5.3" fill="#e9eff9" stroke="#7496d2" stroke-width="1"/><path d="M6.1 5.8 V1.5 A4.4 4.4 0 0 1 10.4 5.8 Z" fill="#5f86cc"/><circle cx="6" cy="2.3" r=".75" fill="#f06a5a"/><circle cx="9.7" cy="6" r=".75" fill="#f06a5a"/><circle cx="6" cy="9.7" r=".75" fill="#f06a5a"/><circle cx="2.2" cy="6" r=".75" fill="#f06a5a"/></svg>
<div class="t" style="left:18.80px;top:37.00px;font-size:9.9px;color:#2e2e2e;font-weight:normal;transform:scaleX(0.8990);transform-origin:0 0;text-rendering:geometricPrecision;">Отправить PUSH Уведомления:P...</div>
<div class="t" style="left:171.00px;top:37.00px;font-size:9.9px;color:#2e2e2e;font-weight:normal;transform:scaleX(0.8990);transform-origin:0 0;text-rendering:geometricPrecision;">Рассылка PUSH Уведо...</div>
<div class="t" style="left:283.00px;top:37.00px;font-size:9.9px;color:#2e2e2e;font-weight:normal;transform:scaleX(0.8990);transform-origin:0 0;text-rendering:geometricPrecision;">РассылкаPUSHУведом...</div>
<div class="t" style="left:394.50px;top:37.00px;font-size:9.9px;color:#2e2e2e;font-weight:normal;transform:scaleX(0.8990);transform-origin:0 0;text-rendering:geometricPrecision;">Типовые</div>
<div class="rl" style="left:0;top:63.00px;width:1159px"></div>
<svg style="left:3.1999999999999993px;top:49.30px" width="12" height="12" viewBox="0 0 12 12"><circle cx="5.9" cy="6" r="5.3" fill="#e9eff9" stroke="#7496d2" stroke-width="1"/><path d="M6.1 5.8 V1.5 A4.4 4.4 0 0 1 10.4 5.8 Z" fill="#5f86cc"/><circle cx="6" cy="2.3" r=".75" fill="#f06a5a"/><circle cx="9.7" cy="6" r=".75" fill="#f06a5a"/><circle cx="6" cy="9.7" r=".75" fill="#f06a5a"/><circle cx="2.2" cy="6" r=".75" fill="#f06a5a"/></svg>
<div class="t" style="left:18.80px;top:53.00px;font-size:9.9px;color:#2e2e2e;font-weight:normal;transform:scaleX(0.8990);transform-origin:0 0;text-rendering:geometricPrecision;">Отправить PUSH Уведомления:P...</div>
<div class="t" style="left:171.00px;top:53.00px;font-size:9.9px;color:#2e2e2e;font-weight:normal;transform:scaleX(0.8990);transform-origin:0 0;text-rendering:geometricPrecision;">Рассылка PUSH Уведо...</div>
<div class="t" style="left:283.00px;top:53.00px;font-size:9.9px;color:#2e2e2e;font-weight:normal;transform:scaleX(0.8990);transform-origin:0 0;text-rendering:geometricPrecision;">РассылкаPUSHУведом...</div>
<div class="t" style="left:394.50px;top:53.00px;font-size:9.9px;color:#2e2e2e;font-weight:normal;transform:scaleX(0.8990);transform-origin:0 0;text-rendering:geometricPrecision;">Типовые</div>
<div class="rl" style="left:0;top:78.60px;width:1159px"></div>
<svg style="left:3.1999999999999993px;top:64.90px" width="12" height="12" viewBox="0 0 12 12"><circle cx="5.9" cy="6" r="5.3" fill="#e9eff9" stroke="#7496d2" stroke-width="1"/><path d="M6.1 5.8 V1.5 A4.4 4.4 0 0 1 10.4 5.8 Z" fill="#5f86cc"/><circle cx="6" cy="2.3" r=".75" fill="#f06a5a"/><circle cx="9.7" cy="6" r=".75" fill="#f06a5a"/><circle cx="6" cy="9.7" r=".75" fill="#f06a5a"/><circle cx="2.2" cy="6" r=".75" fill="#f06a5a"/></svg>
<div class="t" style="left:18.80px;top:68.00px;font-size:9.9px;color:#2e2e2e;font-weight:normal;transform:scaleX(0.8990);transform-origin:0 0;text-rendering:geometricPrecision;">Отправить PUSH Уведомления:P...</div>
<div class="t" style="left:171.00px;top:68.00px;font-size:9.9px;color:#2e2e2e;font-weight:normal;transform:scaleX(0.8990);transform-origin:0 0;text-rendering:geometricPrecision;">Рассылка PUSH Уведо...</div>
<div class="t" style="left:283.00px;top:68.00px;font-size:9.9px;color:#2e2e2e;font-weight:normal;transform:scaleX(0.8990);transform-origin:0 0;text-rendering:geometricPrecision;">РассылкаPUSHУведом...</div>
<div class="t" style="left:394.50px;top:68.00px;font-size:9.9px;color:#2e2e2e;font-weight:normal;transform:scaleX(0.8990);transform-origin:0 0;text-rendering:geometricPrecision;">Типовые</div>
<div class="rl" style="left:0;top:94.20px;width:1159px"></div>
<svg style="left:3.1999999999999993px;top:80.50px" width="12" height="12" viewBox="0 0 12 12"><circle cx="5.9" cy="6" r="5.3" fill="#e9eff9" stroke="#7496d2" stroke-width="1"/><path d="M6.1 5.8 V1.5 A4.4 4.4 0 0 1 10.4 5.8 Z" fill="#5f86cc"/><circle cx="6" cy="2.3" r=".75" fill="#f06a5a"/><circle cx="9.7" cy="6" r=".75" fill="#f06a5a"/><circle cx="6" cy="9.7" r=".75" fill="#f06a5a"/><circle cx="2.2" cy="6" r=".75" fill="#f06a5a"/></svg>
<div class="t" style="left:18.80px;top:84.00px;font-size:9.9px;color:#2e2e2e;font-weight:normal;transform:scaleX(0.8990);transform-origin:0 0;text-rendering:geometricPrecision;">Отправить PUSH Уведомления:P...</div>
<div class="t" style="left:171.00px;top:84.00px;font-size:9.9px;color:#2e2e2e;font-weight:normal;transform:scaleX(0.8990);transform-origin:0 0;text-rendering:geometricPrecision;">Рассылка PUSH Уведо...</div>
<div class="t" style="left:283.00px;top:84.00px;font-size:9.9px;color:#2e2e2e;font-weight:normal;transform:scaleX(0.8990);transform-origin:0 0;text-rendering:geometricPrecision;">РассылкаPUSHУведом...</div>
<div class="t" style="left:394.50px;top:84.00px;font-size:9.9px;color:#2e2e2e;font-weight:normal;transform:scaleX(0.8990);transform-origin:0 0;text-rendering:geometricPrecision;">Типовые</div>
<div class="rl" style="left:0;top:109.80px;width:1159px"></div>
<svg style="left:3.1999999999999993px;top:96.10px" width="12" height="12" viewBox="0 0 12 12"><circle cx="5.9" cy="6" r="5.3" fill="#e9eff9" stroke="#7496d2" stroke-width="1"/><path d="M6.1 5.8 V1.5 A4.4 4.4 0 0 1 10.4 5.8 Z" fill="#5f86cc"/><circle cx="6" cy="2.3" r=".75" fill="#f06a5a"/><circle cx="9.7" cy="6" r=".75" fill="#f06a5a"/><circle cx="6" cy="9.7" r=".75" fill="#f06a5a"/><circle cx="2.2" cy="6" r=".75" fill="#f06a5a"/></svg>
<div class="t" style="left:18.80px;top:100.00px;font-size:9.9px;color:#2e2e2e;font-weight:normal;transform:scaleX(0.8990);transform-origin:0 0;text-rendering:geometricPrecision;">Отправить PUSH Уведомления:P...</div>
<div class="t" style="left:171.00px;top:100.00px;font-size:9.9px;color:#2e2e2e;font-weight:normal;transform:scaleX(0.8990);transform-origin:0 0;text-rendering:geometricPrecision;">Рассылка PUSH Уведо...</div>
<div class="t" style="left:283.00px;top:100.00px;font-size:9.9px;color:#2e2e2e;font-weight:normal;transform:scaleX(0.8990);transform-origin:0 0;text-rendering:geometricPrecision;">РассылкаPUSHУведом...</div>
<div class="t" style="left:394.50px;top:100.00px;font-size:9.9px;color:#2e2e2e;font-weight:normal;transform:scaleX(0.8990);transform-origin:0 0;text-rendering:geometricPrecision;">Типовые</div>
<div class="rl" style="left:0;top:125.40px;width:1159px"></div>
<svg style="left:3.1999999999999993px;top:111.70px" width="12" height="12" viewBox="0 0 12 12"><circle cx="5.9" cy="6" r="5.3" fill="#e9eff9" stroke="#7496d2" stroke-width="1"/><path d="M6.1 5.8 V1.5 A4.4 4.4 0 0 1 10.4 5.8 Z" fill="#5f86cc"/><circle cx="6" cy="2.3" r=".75" fill="#f06a5a"/><circle cx="9.7" cy="6" r=".75" fill="#f06a5a"/><circle cx="6" cy="9.7" r=".75" fill="#f06a5a"/><circle cx="2.2" cy="6" r=".75" fill="#f06a5a"/></svg>
<div class="t" style="left:18.80px;top:115.00px;font-size:9.9px;color:#2e2e2e;font-weight:normal;transform:scaleX(0.8990);transform-origin:0 0;text-rendering:geometricPrecision;">Отправить PUSH Уведомления:P...</div>
<div class="t" style="left:171.00px;top:115.00px;font-size:9.9px;color:#2e2e2e;font-weight:normal;transform:scaleX(0.8990);transform-origin:0 0;text-rendering:geometricPrecision;">Рассылка PUSH Уведо...</div>
<div class="t" style="left:283.00px;top:115.00px;font-size:9.9px;color:#2e2e2e;font-weight:normal;transform:scaleX(0.8990);transform-origin:0 0;text-rendering:geometricPrecision;">РассылкаPUSHУведом...</div>
<div class="t" style="left:394.50px;top:115.00px;font-size:9.9px;color:#2e2e2e;font-weight:normal;transform:scaleX(0.8990);transform-origin:0 0;text-rendering:geometricPrecision;">Типовые</div>
<div class="rl" style="left:0;top:141.00px;width:1159px"></div>
<svg style="left:3.1999999999999993px;top:127.30px" width="12" height="12" viewBox="0 0 12 12"><circle cx="5.9" cy="6" r="5.3" fill="#e9eff9" stroke="#7496d2" stroke-width="1"/><path d="M6.1 5.8 V1.5 A4.4 4.4 0 0 1 10.4 5.8 Z" fill="#5f86cc"/><circle cx="6" cy="2.3" r=".75" fill="#f06a5a"/><circle cx="9.7" cy="6" r=".75" fill="#f06a5a"/><circle cx="6" cy="9.7" r=".75" fill="#f06a5a"/><circle cx="2.2" cy="6" r=".75" fill="#f06a5a"/></svg>
<div class="t" style="left:18.80px;top:131.00px;font-size:9.9px;color:#2e2e2e;font-weight:normal;transform:scaleX(0.8990);transform-origin:0 0;text-rendering:geometricPrecision;">Отправить PUSH Уведомления:P...</div>
<div class="t" style="left:171.00px;top:131.00px;font-size:9.9px;color:#2e2e2e;font-weight:normal;transform:scaleX(0.8990);transform-origin:0 0;text-rendering:geometricPrecision;">Рассылка PUSH Уведо...</div>
<div class="t" style="left:283.00px;top:131.00px;font-size:9.9px;color:#2e2e2e;font-weight:normal;transform:scaleX(0.8990);transform-origin:0 0;text-rendering:geometricPrecision;">РассылкаPUSHУведом...</div>
<div class="t" style="left:394.50px;top:131.00px;font-size:9.9px;color:#2e2e2e;font-weight:normal;transform:scaleX(0.8990);transform-origin:0 0;text-rendering:geometricPrecision;">Типовые</div>
<div class="rl" style="left:0;top:156.60px;width:1159px"></div>
<svg style="left:3.1999999999999993px;top:142.90px" width="12" height="12" viewBox="0 0 12 12"><circle cx="5.9" cy="6" r="5.3" fill="#e9eff9" stroke="#7496d2" stroke-width="1"/><path d="M6.1 5.8 V1.5 A4.4 4.4 0 0 1 10.4 5.8 Z" fill="#5f86cc"/><circle cx="6" cy="2.3" r=".75" fill="#f06a5a"/><circle cx="9.7" cy="6" r=".75" fill="#f06a5a"/><circle cx="6" cy="9.7" r=".75" fill="#f06a5a"/><circle cx="2.2" cy="6" r=".75" fill="#f06a5a"/></svg>
<div class="t" style="left:18.80px;top:146.00px;font-size:9.9px;color:#2e2e2e;font-weight:normal;transform:scaleX(0.8990);transform-origin:0 0;text-rendering:geometricPrecision;">Отправить PUSH Уведомления:P...</div>
<div class="t" style="left:171.00px;top:146.00px;font-size:9.9px;color:#2e2e2e;font-weight:normal;transform:scaleX(0.8990);transform-origin:0 0;text-rendering:geometricPrecision;">Рассылка PUSH Уведо...</div>
<div class="t" style="left:283.00px;top:146.00px;font-size:9.9px;color:#2e2e2e;font-weight:normal;transform:scaleX(0.8990);transform-origin:0 0;text-rendering:geometricPrecision;">РассылкаPUSHУведом...</div>
<div class="t" style="left:394.50px;top:146.00px;font-size:9.9px;color:#2e2e2e;font-weight:normal;transform:scaleX(0.8990);transform-origin:0 0;text-rendering:geometricPrecision;">Типовые</div>
<div class="rl" style="left:0;top:172.20px;width:1159px"></div>
<svg style="left:3.1999999999999993px;top:158.50px" width="12" height="12" viewBox="0 0 12 12"><circle cx="5.9" cy="6" r="5.3" fill="#e9eff9" stroke="#7496d2" stroke-width="1"/><path d="M6.1 5.8 V1.5 A4.4 4.4 0 0 1 10.4 5.8 Z" fill="#5f86cc"/><circle cx="6" cy="2.3" r=".75" fill="#f06a5a"/><circle cx="9.7" cy="6" r=".75" fill="#f06a5a"/><circle cx="6" cy="9.7" r=".75" fill="#f06a5a"/><circle cx="2.2" cy="6" r=".75" fill="#f06a5a"/></svg>
<div class="t" style="left:18.80px;top:162.00px;font-size:9.9px;color:#2e2e2e;font-weight:normal;transform:scaleX(0.8990);transform-origin:0 0;text-rendering:geometricPrecision;">Отправить PUSH Уведомления:P...</div>
<div class="t" style="left:171.00px;top:162.00px;font-size:9.9px;color:#2e2e2e;font-weight:normal;transform:scaleX(0.8990);transform-origin:0 0;text-rendering:geometricPrecision;">Рассылка PUSH Уведо...</div>
<div class="t" style="left:283.00px;top:162.00px;font-size:9.9px;color:#2e2e2e;font-weight:normal;transform:scaleX(0.8990);transform-origin:0 0;text-rendering:geometricPrecision;">РассылкаPUSHУведом...</div>
<div class="t" style="left:394.50px;top:162.00px;font-size:9.9px;color:#2e2e2e;font-weight:normal;transform:scaleX(0.8990);transform-origin:0 0;text-rendering:geometricPrecision;">Типовые</div>
</div>
<svg style="left:1174.6px;top:506.8px" width="5" height="3" viewBox="0 0 5 3"><path d="M0 3 L2.45 0 L4.9 3Z" fill="#c6c6c6"/></svg>
<div class="ab" style="left:1174.2px;top:517.7px;width:5.8px;height:122.5px;border-radius:3px;background:#d5d5d5"></div>
<div class="ab" style="left:1174.2px;top:517.7px;width:5.8px;height:14.5px;border-radius:3px;background:#9a9a9a"></div>
<svg style="left:1174.6px;top:648.8px" width="5" height="3" viewBox="0 0 5 3"><path d="M0 0 L4.9 0 L2.45 2.8Z" fill="#3c3c3c"/></svg>
<div class="ab" style="left:349px;top:92px;width:731.00px;height:341.00px;border:1px solid #a8a8a8;border-top-color:#b4b4b4;background:#fff;box-shadow:1px 1px 3px rgba(0,0,0,.16)"></div>
<svg style="left:362.3px;top:102.3px" width="15" height="14" viewBox="0 0 15 14"><path d="M7.5 1 L9.2 5.4 L13.9 5.6 L10.3 8.6 L11.5 13.1 L7.5 10.6 L3.5 13.1 L4.7 8.6 L1.1 5.6 L5.8 5.4Z" fill="none" stroke="#b5b5b5" stroke-width="1"/></svg>
<div class="t" style="left:385.80px;top:103.00px;font-size:15.4px;color:#1c1c1c;font-weight:normal;text-rendering:geometricPrecision;">Регламентное задание</div>
<svg style="left:980px;top:101.2px" width="13.6" height="13.6" viewBox="0 0 24 24"><g fill="none" stroke="#5c5c5c" stroke-width="1.8" stroke-linecap="round"><path d="M10 13a5 5 0 0 0 7.54.54l3-3a5 5 0 0 0-7.07-7.07l-1.72 1.71"/><path d="M14 11a5 5 0 0 0-7.54-.54l-3 3a5 5 0 0 0 7.07 7.07l1.71-1.71"/></g></svg>
<svg style="left:1010px;top:104.00px" width="5" height="5" viewBox="0 0 5 5"><circle cx="2.5" cy="2.2" r="1.0" fill="#4a4a4a"/></svg>
<svg style="left:1010px;top:107.30px" width="5" height="5" viewBox="0 0 5 5"><circle cx="2.5" cy="2.2" r="1.0" fill="#4a4a4a"/></svg>
<svg style="left:1010px;top:110.60px" width="5" height="5" viewBox="0 0 5 5"><circle cx="2.5" cy="2.2" r="1.0" fill="#4a4a4a"/></svg>
<div class="ab" style="left:1034px;top:105.6px;width:8.3px;height:7.6px;border:1.2px solid #4a4a4a;border-top-width:1.8px;border-radius:1px"></div>
<svg style="left:1057px;top:104px" width="11" height="11" viewBox="0 0 11 11"><path d="M1.6 1.6 L9.8 9.8 M9.8 1.6 L1.6 9.8" stroke="#4a4a4a" stroke-width="1.1"/></svg>
<div class="ab" style="left:360.3px;top:128px;width:36.7px;height:20.6px;border:1px solid #d2b000;border-bottom-color:#b39500;border-radius:2px;background:linear-gradient(#fbe445,#f6d500 50%,#efc900);box-shadow:0 1px 0 rgba(0,0,0,.12)"></div>
<div class="t" style="left:371.50px;top:134.00px;font-size:10.3px;color:#3a3a3a;font-weight:bold;">ОК</div>
<div class="btn" style="left:405.3px;top:128px;width:59.40px;height:20.70px"></div>
<div class="t" style="left:417.00px;top:134.00px;font-size:10.3px;color:#383838;font-weight:normal;">Отмена</div>
<div class="btn" style="left:1014.2px;top:128.4px;width:49.20px;height:20.30px"></div><svg style="left:1053.5px;top:138.2px" width="5" height="3" viewBox="0 0 5 3"><path d="M0 0 H4.8 L2.4 2.8Z" fill="#404040"/></svg>
<div class="t" style="left:1026.30px;top:134.00px;font-size:10.3px;color:#383838;font-weight:normal;">Еще</div>
<div class="t" style="left:360.20px;top:163.00px;font-size:10.3px;color:#4a4a4a;font-weight:normal;">Наименование:</div>
<div class="t" style="left:360.20px;top:190.00px;font-size:10.3px;color:#4a4a4a;font-weight:normal;">Метаданные:</div>
<div class="t" style="left:360.20px;top:219.00px;font-size:10.3px;color:#4a4a4a;font-weight:normal;">Метод:</div>
<div class="t" style="left:360.20px;top:247.00px;font-size:10.3px;color:#4a4a4a;font-weight:normal;">Пользователь:</div>
<div class="t" style="left:360.20px;top:275.00px;font-size:10.3px;color:#4a4a4a;font-weight:normal;">Ключ:</div>
<div class="ab" style="left:439px;top:157.4px;width:276.5px;height:20.2px;border:1px solid #bcbcbc;border-radius:3px;background:#fff"></div>
<div class="ab" style="left:437px;top:183px;width:280px;height:26px;border:1.6px solid #f7c200;border-bottom:none;background:#fff"></div>
<div class="ab" style="left:697.5px;top:185px;width:18px;height:24px;background:#f0f0f0;border-left:1px solid #c9c9c9"></div>
<svg style="left:703.5px;top:193px" width="6" height="3.5" viewBox="0 0 6 3.5"><path d="M0 0 H6 L3 3.5Z" fill="#333"/></svg>
<div class="ab" style="left:442.5px;top:188.5px;width:1.2px;height:12.8px;background:#5a5a5a"></div>
<div class="ab" style="left:360.5px;top:298.4px;width:12px;height:11.3px;border:1px solid #a6a6a6;border-radius:2px;background:#fff"></div>
<div class="clip" style="left:350px;top:290px;width:89px;height:140px">
<div class="t" style="left:28.00px;top:10.00px;font-size:10.3px;color:#4a4a4a;font-weight:normal;">Использование</div>
<div class="t" style="left:10.30px;top:31.00px;font-size:10.3px;color:#4066c0;font-weight:normal;text-decoration:underline">Выполнять: один раз</div>
<div class="t" style="left:10.20px;top:68.00px;font-size:12.8px;color:#27a050;font-weight:normal;">Перезапуск</div>
<div class="t" style="left:10.20px;top:89.00px;font-size:10.3px;color:#4a4a4a;font-weight:normal;">Количество повторов</div>
<div class="t" style="left:10.20px;top:117.00px;font-size:10.3px;color:#4a4a4a;font-weight:normal;">Интервал повтора</div>
</div>
<div class="ab" style="left:719px;top:157px;width:1px;height:270px;background:repeating-linear-gradient(180deg,#d6d6de 0 3px,transparent 3px 5px)"></div>
<div class="t" style="left:724.30px;top:160.00px;font-size:10.3px;color:#4a4a4a;font-weight:normal;">Параметры задания:</div>
<div class="btn" style="left:724px;top:174px;width:68.00px;height:20.70px"></div>
<div class="t" style="left:735.50px;top:180.00px;font-size:10.3px;color:#383838;font-weight:normal;">Добавить</div>
<div class="btn" style="left:809.4px;top:174.3px;width:48.00px;height:20.40px"></div>
<div class="ab" style="left:833.4px;top:175.3px;width:1px;height:18.4px;background:#dcdcdc"></div>
<svg style="left:815.5px;top:178.5px" width="11" height="12" viewBox="0 0 11 12"><path d="M5.5 1 L10.5 6 H7.5 V11 H3.5 V6 H0.5Z" fill="#a9b5c1"/></svg>
<svg style="left:839.5px;top:178.5px" width="11" height="12" viewBox="0 0 11 12"><path d="M5.5 11 L10.5 6 H7.5 V1 H3.5 V6 H0.5Z" fill="#a9b5c1"/></svg>
<div class="ab" style="left:865.8px;top:174.2px;width:140.2px;height:20.3px;border:1px solid #bcbcbc;border-radius:3px;background:#fff"></div>
<div class="ab" style="left:988.5px;top:175.5px;width:1px;height:18px;background:#d2d2d2"></div>
<div class="t" style="left:869.50px;top:181.00px;font-size:10.3px;color:#b5b5b5;font-weight:normal;">Поиск (Ctrl+F)</div>
<svg style="left:994.3px;top:181.3px" width="7" height="7" viewBox="0 0 7 7"><path d="M1.2 1.2 L5.6 5.6 M5.6 1.2 L1.2 5.6" stroke="#4a4a4a" stroke-width="1"/></svg>
<div class="btn" style="left:1014px;top:174.3px;width:49.50px;height:20.40px"></div><svg style="left:1053.5px;top:183.6px" width="5" height="3" viewBox="0 0 5 3"><path d="M0 0 H4.8 L2.4 2.8Z" fill="#404040"/></svg>
<div class="t" style="left:1026.30px;top:181.00px;font-size:10.3px;color:#383838;font-weight:normal;">Еще</div>
<div class="ab" style="left:723.5px;top:202.5px;width:340px;height:219px;border:1px solid #b9b9b9;background:#fff"></div>
<div class="hdr" style="left:724.5px;top:203.5px;width:338px;height:24px"></div>
<div class="ab" style="left:820px;top:203.5px;width:1px;height:5px;background:#d0d0d0"></div>
<div class="ab" style="left:942px;top:203.5px;width:1px;height:5px;background:#d0d0d0"></div>
<div class="ab" style="left:1045px;top:208px;width:12px;height:204px;border:1px solid #bbb;border-top-color:#555;border-left-color:#555;background:#fff"></div>
<div class="ab" style="left:439px;top:209px;width:3px;height:451px;background:linear-gradient(90deg,rgba(0,0,0,0),rgba(0,0,0,.09))"></div>
<div class="ab" style="left:441.6px;top:208px;width:616px;height:452px;border:1px solid #8a8a8a;border-top-color:#6e6e6e;border-left-color:#7c7c7c;background:#fff;box-shadow:1px 1px 2px rgba(0,0,0,.3)"></div>
<div class="t" style="left:456.30px;top:217.00px;font-size:10.48px;color:#3c3c3c;font-weight:normal;">ВыполнениеОбмена (Выполнение обмена)</div>
<div class="t" style="left:456.30px;top:240.00px;font-size:10.48px;color:#3c3c3c;font-weight:normal;">ЗаполнитьОчиститьАктуальныйРежимРаботы (Актуализация режима работы)</div>
<div class="t" style="left:456.30px;top:264.00px;font-size:10.48px;color:#3c3c3c;font-weight:normal;">НочнойАудит (Ночной аудит)</div>
<div class="t" style="left:456.30px;top:288.00px;font-size:10.48px;color:#3c3c3c;font-weight:normal;">ОбновитьСхемуПроверкиКонтрагентов (Обновить схему проверки контрагентов)</div>
<div class="t" style="left:456.30px;top:311.00px;font-size:10.48px;color:#3c3c3c;font-weight:normal;">ПолучитьДанныеTravelline (Получить данные Travelline)</div>
<div class="t" style="left:456.30px;top:335.00px;font-size:10.48px;color:#3c3c3c;font-weight:normal;">ПолучитьДанныеWuBook (Получить данные WuBook)</div>
<div class="t" style="left:456.30px;top:359.00px;font-size:10.48px;color:#3c3c3c;font-weight:normal;">ПроверкаКонтрагентовПоФНС (Проверка контрагентов по ФНС)</div>
<div class="t" style="left:456.30px;top:383.00px;font-size:10.48px;color:#3c3c3c;font-weight:normal;">РегистрацияВыбытияГостей (Регистрация выбытия гостей)</div>
<div class="t" style="left:456.30px;top:406.00px;font-size:10.48px;color:#3c3c3c;font-weight:normal;">УдалениеНеактуальныхДокументовПротоколовОбмена (Удаление неактуальных документов протоколов обмена)</div>
<div class="t" style="left:456.30px;top:430.00px;font-size:10.48px;color:#3c3c3c;font-weight:normal;">УдалениеУстаревшихВерсийИсторииДанных (Удаление устаревших версий истории данных)</div>
<div class="t" style="left:456.30px;top:454.00px;font-size:10.48px;color:#3c3c3c;font-weight:normal;">яъЗапускВнешнихОбработок (Запуск внешних обработок)</div>
<div class="t" style="left:456.30px;top:478.00px;font-size:10.48px;color:#3c3c3c;font-weight:normal;">яъКонтрольЗахваченныхПриложений (Контроль захваченных приложений)</div>
<div class="t" style="left:456.30px;top:501.00px;font-size:10.48px;color:#3c3c3c;font-weight:normal;">яъОбновитьВерсииИсторииДанных (Обновить версии истории данных)</div>
<div class="t" style="left:456.30px;top:525.00px;font-size:10.48px;color:#3c3c3c;font-weight:normal;">яъОтправитьPUSHУведомления (Отправить PUSH Уведомления)</div>
<div class="t" style="left:456.30px;top:549.00px;font-size:10.48px;color:#3c3c3c;font-weight:normal;">яъПолучениеСообщенийОтКомпанииКинт (Получение сообщений от компании кинт)</div>
<div class="t" style="left:456.30px;top:572.00px;font-size:10.48px;color:#3c3c3c;font-weight:normal;">яъПроверкаНаличияИсправлений (Проверка наличия исправлений)</div>
<div class="t" style="left:456.30px;top:596.00px;font-size:10.48px;color:#3c3c3c;font-weight:normal;">яъПроверкаНаличияОбновлений (Проверка наличия обновлений)</div>
<div class="t" style="left:456.30px;top:620.00px;font-size:10.48px;color:#3c3c3c;font-weight:normal;">яъРассылкаСообщений (Регламентная ссылка сообщений)</div>
<div class="t" style="left:456.30px;top:644.00px;font-size:10.48px;color:#3c3c3c;font-weight:normal;">яъСлияниеИндекса (Слияние индекса)</div>
<svg style="left:0;top:0" width="1200" height="671" viewBox="0 0 1200 671"><path d="M740.3 136.3 L721 174" stroke="#f51a1a" stroke-width="2.5" stroke-linecap="round"/><path d="M711.2 191.8 L717.2 170.2 L720.6 175.2 L725.8 174.6Z" fill="#f51a1a" stroke="#f51a1a" stroke-width=".6" stroke-linejoin="round"/></svg>
</body></html>
